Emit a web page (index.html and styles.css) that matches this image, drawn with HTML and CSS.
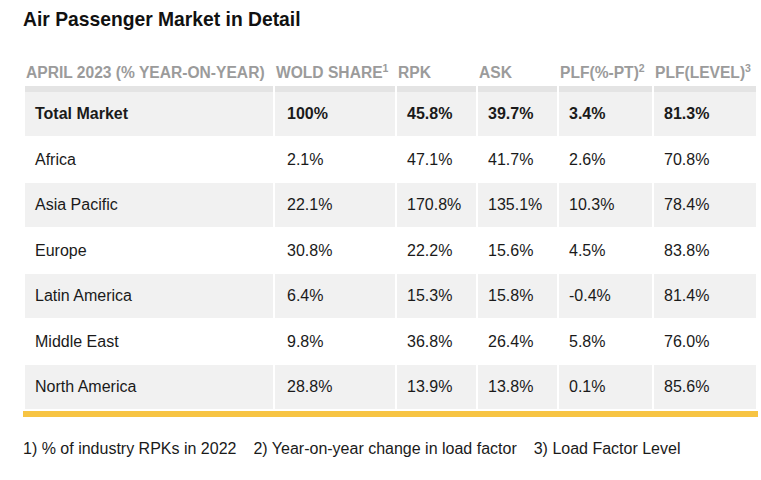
FILE: index.html
```html
<!DOCTYPE html>
<html>
<head>
<meta charset="utf-8">
<link rel="stylesheet" href="styles.css">
</head>
<body>
<div class="page">
  <h1 class="title">Air Passenger Market in Detail</h1>
  <table class="market">
    <colgroup>
      <col class="c1"><col class="c2"><col class="c3"><col class="c4"><col class="c5"><col class="c6">
    </colgroup>
    <thead>
      <tr>
        <th>APRIL 2023 (% YEAR-ON-YEAR)</th>
        <th>WOLD SHARE<sup>1</sup></th>
        <th>RPK</th>
        <th>ASK</th>
        <th>PLF(%-PT)<sup>2</sup></th>
        <th>PLF(LEVEL)<sup>3</sup></th>
      </tr>
    </thead>
    <tbody>
      <tr class="total"><td>Total Market</td><td>100%</td><td>45.8%</td><td>39.7%</td><td>3.4%</td><td>81.3%</td></tr>
      <tr><td>Africa</td><td>2.1%</td><td>47.1%</td><td>41.7%</td><td>2.6%</td><td>70.8%</td></tr>
      <tr><td>Asia Pacific</td><td>22.1%</td><td>170.8%</td><td>135.1%</td><td>10.3%</td><td>78.4%</td></tr>
      <tr><td>Europe</td><td>30.8%</td><td>22.2%</td><td>15.6%</td><td>4.5%</td><td>83.8%</td></tr>
      <tr><td>Latin America</td><td>6.4%</td><td>15.3%</td><td>15.8%</td><td>-0.4%</td><td>81.4%</td></tr>
      <tr><td>Middle East</td><td>9.8%</td><td>36.8%</td><td>26.4%</td><td>5.8%</td><td>76.0%</td></tr>
      <tr><td>North America</td><td>28.8%</td><td>13.9%</td><td>13.8%</td><td>0.1%</td><td>85.6%</td></tr>
    </tbody>
  </table>
  <p class="notes"><span class="note">1) % of industry RPKs in 2022</span><span class="note">2) Year-on-year change in load factor</span><span class="note">3) Load Factor Level</span></p>
</div>
</body>
</html>
```
FILE: styles.css
```css
html, body {
  margin: 0;
  padding: 0;
  background: #ffffff;
}
body {
  font-family: "Liberation Sans", Arial, sans-serif;
  color: #1a1a1a;
}
.page {
  padding: 0 3px 0 23px;
}
.title {
  margin: 0;
  padding-top: 9px;
  font-size: 19.3px;
  line-height: 22px;
  font-weight: bold;
  color: #111111;
}
.market {
  margin-top: 31px;
  width: 735px;
  table-layout: fixed;
  border-collapse: separate;
  border-spacing: 2px;
  border-bottom: 6px solid #f7c443;
}
.c1 { width: 248px; }
.c2 { width: 120px; }
.c3 { width: 79px; }
.c4 { width: 79px; }
.c5 { width: 93px; }
.c6 { width: 102px; }
.market th {
  text-align: left;
  font-size: 15.6px;
  line-height: 18px;
  font-weight: bold;
  color: #9b9b9b;
  padding: 0 0 2px 1px;
  white-space: nowrap;
}
.market th sup {
  font-size: 10.5px;
  line-height: 0;
  vertical-align: 6px;
}
.market td {
  font-size: 16px;
  line-height: 19.5px;
  padding: 12px 4px 12px 10px;
  white-space: nowrap;
}
.market td:nth-child(2) {
  padding-left: 12px;
}
.market tbody tr:nth-child(odd) td {
  background: #f1f1f1;
}
.market tr.total td {
  font-weight: bold;
  border-top: 6px solid #e4e4e4;
}
.notes {
  margin: 23px 0 0 0;
  font-size: 16px;
  line-height: 18px;
  color: #1a1a1a;
}
.note {
  margin-right: 17px;
}
```
